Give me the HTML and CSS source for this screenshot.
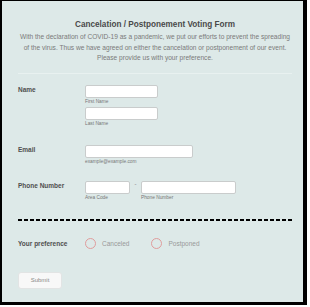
FILE: index.html
```html
<!DOCTYPE html>
<html lang="en">
<head>
  <meta charset="UTF-8" />
  <title>Cancelation / Postponement Voting Form</title>
  <link rel="stylesheet" href="styles.css">
</head>
<body>
<div class="frame">
  <div class="form">
    <h1>Cancelation / Postponement Voting Form</h1>
    <p class="intro">With the declaration of COVID-19 as a pandemic, we put our efforts to prevent the spreading<br>of the virus. Thus we have agreed on either the cancelation or postponement of our event.<br>Please provide us with your preference.</p>
    <div class="divider"></div>

    <div class="row row-name">
      <label class="row-label">Name</label>
      <div class="fields">
        <input type="text" class="inp inp-name" />
        <span class="sub">First Name</span>
        <input type="text" class="inp inp-name second" />
        <span class="sub">Last Name</span>
      </div>
    </div>

    <div class="row row-email">
      <label class="row-label">Email</label>
      <div class="fields">
        <input type="text" class="inp inp-email" />
        <span class="sub">example@example.com</span>
      </div>
    </div>

    <div class="row row-phone">
      <label class="row-label">Phone Number</label>
      <div class="phone">
        <div class="fields">
          <input type="text" class="inp inp-area" />
          <span class="sub">Area Code</span>
        </div>
        <span class="dash">-</span>
        <div class="fields">
          <input type="text" class="inp inp-phone" />
          <span class="sub">Phone Number</span>
        </div>
      </div>
    </div>

    <div class="dashed"></div>

    <div class="row row-pref">
      <label class="row-label">Your preference</label>
      <div class="options">
        <span class="opt"><span class="radio"></span>Canceled</span>
        <span class="opt"><span class="radio"></span>Postponed</span>
      </div>
    </div>

    <button class="btn-submit">Submit</button>
  </div>
</div>
</body>
</html>
```

FILE: styles.css
```css
body {
  margin: 0;
  background: #fff;
  font-family: "Liberation Sans", Arial, sans-serif;
}
.frame {
  box-sizing: border-box;
  width: 307px;
  height: 305px;
  background: #dde9e8;
  border-style: solid;
  border-color: #000;
  border-width: 1px 4px 3px 2px;
}
.form {
  padding: 18px 11px 0 16px;
}
h1 {
  margin: 0;
  font-size: 8.2px;
  line-height: 11px;
  text-align: center;
  color: #4a4a4a;
}
.intro {
  margin: 2px -4px 0;
  font-size: 6.6px;
  line-height: 10.6px;
  text-align: center;
  white-space: nowrap;
  color: #7a7a7a;
}
.divider {
  height: 1px;
  background: #e8f1f0;
  margin-top: 9px;
}
.row {
  display: flex;
  align-items: flex-start;
}
.row-label {
  width: 67px;
  flex-shrink: 0;
  font-size: 6.5px;
  line-height: 9px;
  font-weight: bold;
  color: #4f4f4f;
}
.row-name { margin-top: 11px; }
.row-email { margin-top: 18px; }
.row-phone { margin-top: 16px; }
.fields {
  display: flex;
  flex-direction: column;
}
.inp {
  box-sizing: border-box;
  height: 13px;
  margin: 0;
  padding: 0;
  background: #fff;
  border: 1px solid #c9cccc;
  border-radius: 2px;
}
.inp-name { width: 73px; }
.inp.second { margin-top: 2px; }
.inp-email { width: 108px; }
.inp-area { width: 45px; }
.inp-phone { width: 95px; }
.sub {
  margin-top: 1px;
  font-size: 4.8px;
  line-height: 6px;
  color: #777;
}
.phone {
  display: flex;
  align-items: flex-start;
}
.dash {
  width: 11px;
  text-align: center;
  font-size: 6px;
  line-height: 6px;
  color: #777;
}
.dashed {
  height: 2px;
  margin-top: 18px;
  background: repeating-linear-gradient(to right, #000 0 4px, transparent 4px 6px);
}
.row-pref {
  margin-top: 17px;
  align-items: center;
}
.options {
  display: flex;
  gap: 22px;
}
.opt {
  display: flex;
  align-items: center;
  gap: 6px;
  font-size: 6.5px;
  color: #999;
}
.radio {
  box-sizing: border-box;
  width: 11px;
  height: 11px;
  border: 1px solid #e09c9c;
  border-radius: 50%;
}
.btn-submit {
  display: block;
  margin-top: 23px;
  width: 44px;
  height: 17px;
  padding: 0;
  font-family: inherit;
  font-size: 6px;
  color: #888;
  background: #f8f8f8;
  border: 1px solid #e2e4e4;
  border-radius: 3px;
}
```
